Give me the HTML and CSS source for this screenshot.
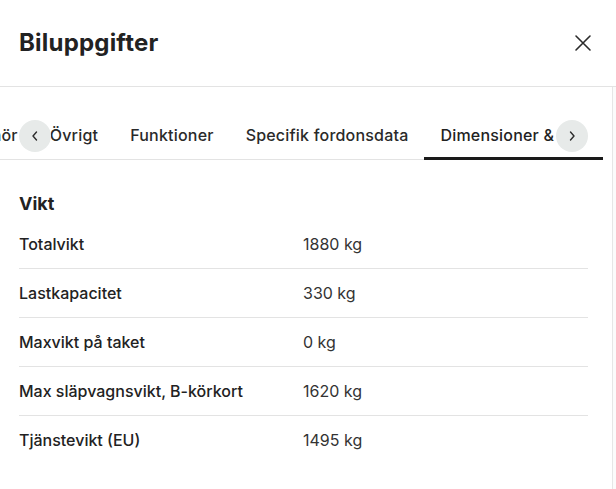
FILE: index.html
```html
<!DOCTYPE html>
<html lang="sv">
<head>
<meta charset="utf-8">
<title>Biluppgifter</title>
<link rel="stylesheet" href="styles.css">
</head>
<body>
<div class="modal">
  <header class="head">
    <h1 class="title">Biluppgifter</h1>
    <button class="close" aria-label="Stäng">
      <svg width="24" height="24" viewBox="0 0 24 24"><path d="M5 5 L19 19 M19 5 L5 19" stroke="#2b2b2b" stroke-width="1.6" fill="none" stroke-linecap="round"/></svg>
    </button>
  </header>
  <div class="body">
    <div class="main">
      <div class="tabbar">
        <nav class="tabs">
          <span class="tab">Tillbehör</span>
          <span class="tab">Övrigt</span>
          <span class="tab">Funktioner</span>
          <span class="tab">Specifik fordonsdata</span>
          <span class="tab active">Dimensioner &amp; vikt</span>
        </nav>
        <button class="arrow prev" aria-label="Föregående">
          <svg width="12" height="12" viewBox="0 0 12 12"><path d="M7.5 2 L4 6 L7.5 10" stroke="#2b2b2b" stroke-width="1.4" fill="none" stroke-linecap="round" stroke-linejoin="round"/></svg>
        </button>
        <button class="arrow next" aria-label="Nästa">
          <svg width="12" height="12" viewBox="0 0 12 12"><path d="M4.5 2 L8 6 L4.5 10" stroke="#2b2b2b" stroke-width="1.4" fill="none" stroke-linecap="round" stroke-linejoin="round"/></svg>
        </button>
      </div>
      <section class="group">
        <h2 class="group-title">Vikt</h2>
        <div class="row"><span class="label">Totalvikt</span><span class="value">1880 kg</span></div>
        <div class="row"><span class="label">Lastkapacitet</span><span class="value">330 kg</span></div>
        <div class="row"><span class="label">Maxvikt på taket</span><span class="value">0 kg</span></div>
        <div class="row"><span class="label">Max släpvagnsvikt, B-körkort</span><span class="value">1620 kg</span></div>
        <div class="row"><span class="label">Tjänstevikt (EU)</span><span class="value">1495 kg</span></div>
      </section>
    </div>
    <div class="track"></div>
  </div>
</div>
</body>
</html>
```

FILE: styles.css
```css
* { box-sizing: border-box; }
html, body { margin: 0; padding: 0; background: #fff; }
body {
  font-family: Inter, "Noto Sans", "Liberation Sans", sans-serif;
  color: #222;
  width: 616px;
  height: 489px;
  overflow: hidden;
}
.modal { display: flex; flex-direction: column; height: 489px; }
.head {
  height: 87px;
  flex: none;
  display: flex;
  align-items: center;
  justify-content: space-between;
  padding: 0 21px 0 19px;
  border-bottom: 1px solid #e3e3e3;
}
.title {
  margin: 0;
  font-size: 24px;
  font-weight: 700;
  letter-spacing: 0.2px;
  color: #222;
  line-height: 30px;
}
.close {
  border: 0; background: none; padding: 0; width: 24px; height: 24px;
  display: flex; margin-top: -1px;
}
.body { flex: 1; display: flex; min-height: 0; }
.main { width: 612px; padding: 24px 24px 0 19px; }
.track { flex: 1; border-left: 1px solid #e6e6e6; background: #fbfbfb; }

.tabbar {
  position: relative;
  margin: 0 -15px 0 -19px;
  box-shadow: inset 0 -1px 0 #e3e3e3;
  overflow: hidden;
}
.tabs { display: flex; justify-content: flex-end; }
.tab {
  flex: none;
  padding: 12px 16px 10px;
  font-size: 16px;
  line-height: 24px;
  font-weight: 500;
  letter-spacing: 0.2px;
  color: #2a2a2a;
  border-bottom: 3px solid transparent;
  white-space: nowrap;
}
.tab.active { border-bottom-color: #1a1a1a; color: #222; }
.arrow {
  position: absolute;
  top: 9px;
  width: 32px; height: 32px;
  border-radius: 50%;
  border: 0; padding: 0;
  background: #e7eae9;
  display: flex; align-items: center; justify-content: center;
}
.arrow.prev { left: 19px; }
.arrow.next { right: 15px; }

.group { padding-top: 32px; }
.group-title {
  margin: 0 0 4px;
  font-size: 18px;
  line-height: 24px;
  font-weight: 700;
  color: #222;
}
.row {
  display: grid;
  grid-template-columns: 284px 1fr;
  padding: 12px 0;
  border-bottom: 1px solid #e3e3e3;
  font-size: 16px;
  line-height: 24px;
}
.row:last-child { border-bottom: 0; }
.label { font-weight: 500; color: #222; }
.value { font-weight: 400; color: #333; }
```
